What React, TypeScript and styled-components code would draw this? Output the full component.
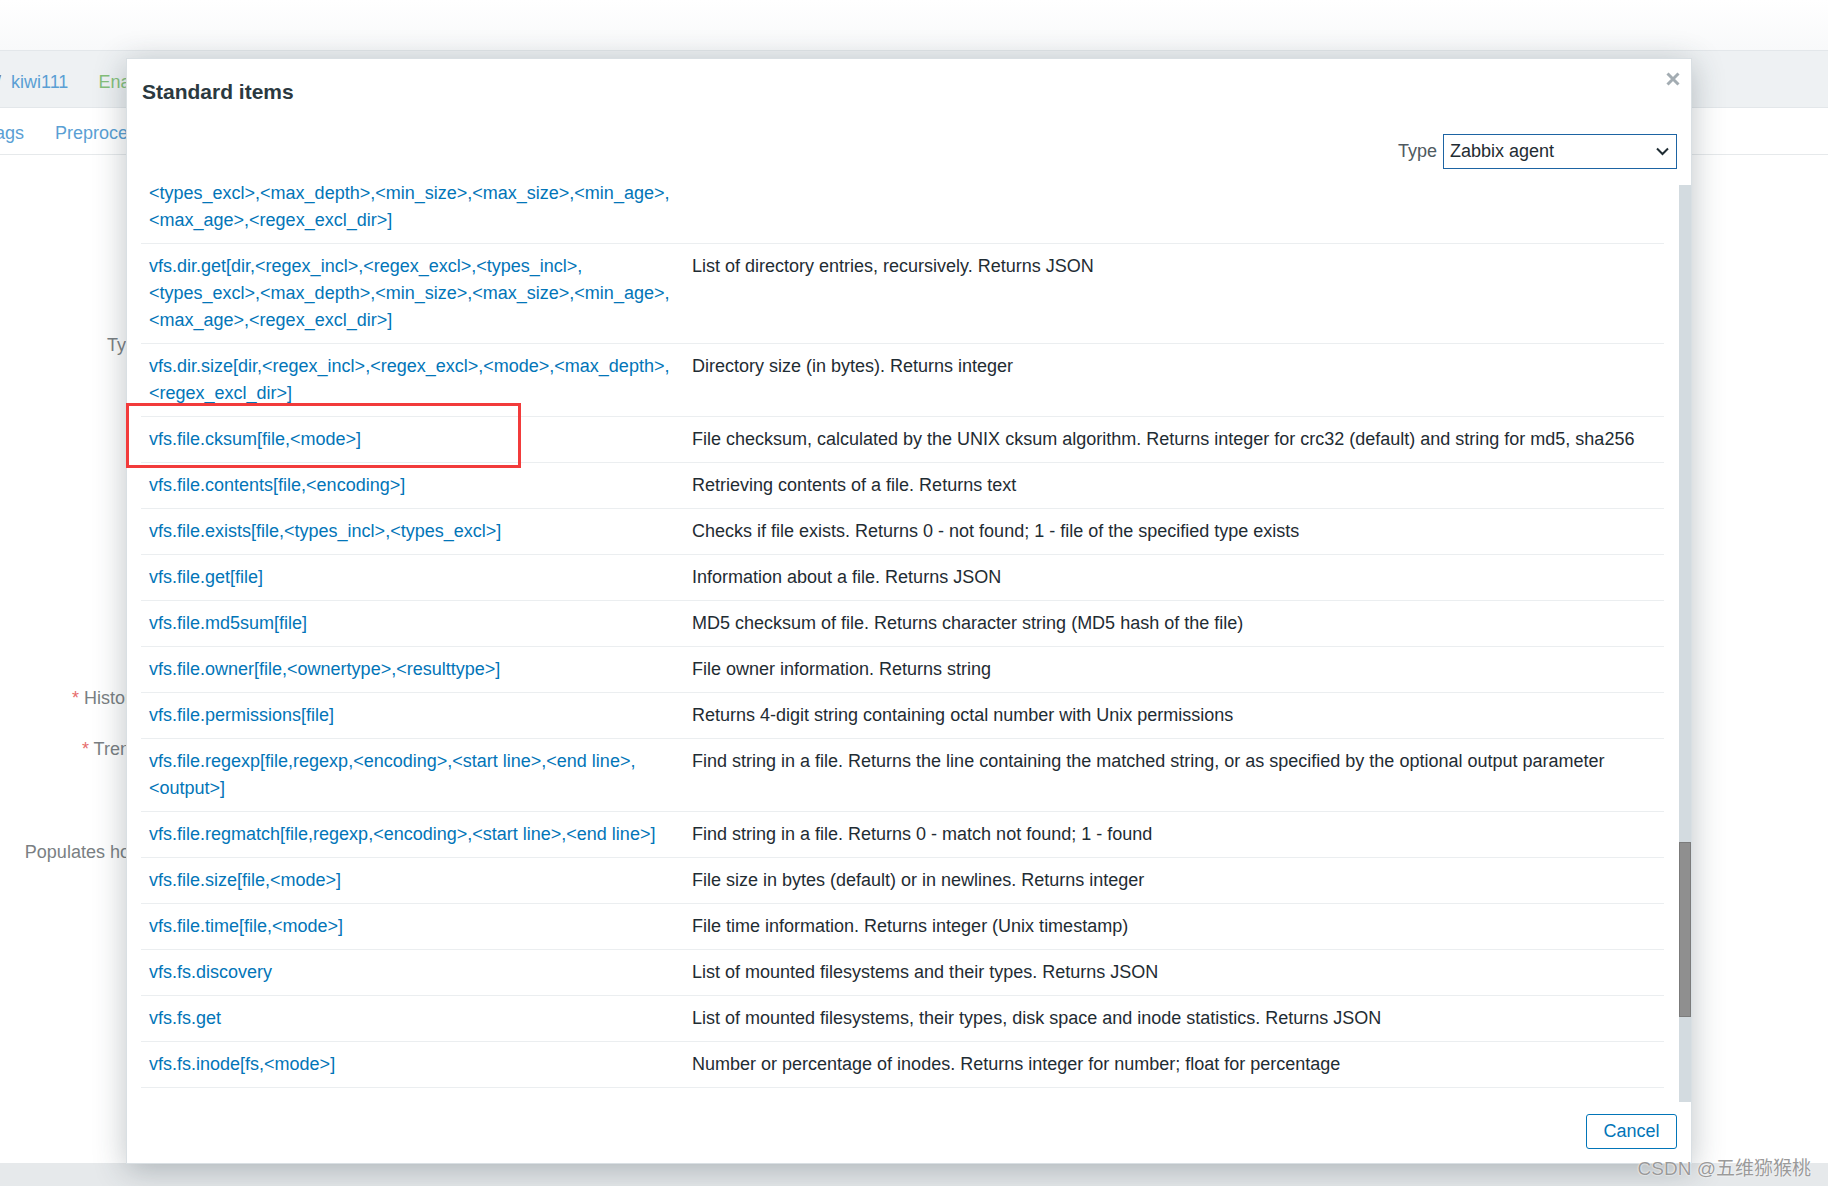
import React from "react";
import styled, { createGlobalStyle } from "styled-components";

const GlobalStyle = createGlobalStyle`
  html, body {
    margin: 0;
    padding: 0;
    overflow: hidden;
    background: #ffffff;
  }
  body {
    font-family: "Liberation Sans", Arial, sans-serif;
    font-size: 18px;
  }
`;

type Item = { key: string; desc: string };

const items: Item[] = [
  {
    key: "vfs.dir.count[dir,<regex_incl>,<regex_excl>,<types_incl>,<types_excl>,<max_depth>,<min_size>,<max_size>,<min_age>,<max_age>,<regex_excl_dir>]",
    desc: "Directory entry count. Returns integer",
  },
  {
    key: "vfs.dir.get[dir,<regex_incl>,<regex_excl>,<types_incl>,<types_excl>,<max_depth>,<min_size>,<max_size>,<min_age>,<max_age>,<regex_excl_dir>]",
    desc: "List of directory entries, recursively. Returns JSON",
  },
  {
    key: "vfs.dir.size[dir,<regex_incl>,<regex_excl>,<mode>,<max_depth>,<regex_excl_dir>]",
    desc: "Directory size (in bytes). Returns integer",
  },
  {
    key: "vfs.file.cksum[file,<mode>]",
    desc: "File checksum, calculated by the UNIX cksum algorithm. Returns integer for crc32 (default) and string for md5, sha256",
  },
  { key: "vfs.file.contents[file,<encoding>]", desc: "Retrieving contents of a file. Returns text" },
  {
    key: "vfs.file.exists[file,<types_incl>,<types_excl>]",
    desc: "Checks if file exists. Returns 0 - not found; 1 - file of the specified type exists",
  },
  { key: "vfs.file.get[file]", desc: "Information about a file. Returns JSON" },
  { key: "vfs.file.md5sum[file]", desc: "MD5 checksum of file. Returns character string (MD5 hash of the file)" },
  { key: "vfs.file.owner[file,<ownertype>,<resulttype>]", desc: "File owner information. Returns string" },
  { key: "vfs.file.permissions[file]", desc: "Returns 4-digit string containing octal number with Unix permissions" },
  {
    key: "vfs.file.regexp[file,regexp,<encoding>,<start line>,<end line>,<output>]",
    desc: "Find string in a file. Returns the line containing the matched string, or as specified by the optional output parameter",
  },
  {
    key: "vfs.file.regmatch[file,regexp,<encoding>,<start line>,<end line>]",
    desc: "Find string in a file. Returns 0 - match not found; 1 - found",
  },
  { key: "vfs.file.size[file,<mode>]", desc: "File size in bytes (default) or in newlines. Returns integer" },
  { key: "vfs.file.time[file,<mode>]", desc: "File time information. Returns integer (Unix timestamp)" },
  { key: "vfs.fs.discovery", desc: "List of mounted filesystems and their types. Returns JSON" },
  { key: "vfs.fs.get", desc: "List of mounted filesystems, their types, disk space and inode statistics. Returns JSON" },
  { key: "vfs.fs.inode[fs,<mode>]", desc: "Number or percentage of inodes. Returns integer for number; float for percentage" },
];

// background page (item edit form behind the overlay)
const Page = styled.div`
  position: relative;
  height: 100vh;
  display: flex;
  flex-direction: column;
  overflow: hidden;
`;

const TopStrip = styled.div`
  height: 51px;
  background: linear-gradient(#ffffff, #f8f9fa);
`;

const HostBar = styled.div`
  height: 58px;
  box-sizing: border-box;
  padding-top: 7px;
  border-top: 1px solid #e3e7ea;
  border-bottom: 1px solid #e3e7ea;
  background: #eef1f3;
  display: flex;
  align-items: center;
  gap: 30px;
  margin-top: -1px;
  white-space: nowrap;
`;

const Crumb = styled.span`
  margin-left: -4px;
  margin-right: -20px;
  color: #6d7780;
`;

const HostLink = styled.span`
  color: #5a9fd4;
`;

const Status = styled.span`
  color: #84c07a;
`;

const TabBar = styled.div`
  height: 47px;
  box-sizing: border-box;
  padding-top: 4px;
  border-bottom: 1px solid #e6e9eb;
  display: flex;
  align-items: center;
  gap: 31px;
  margin-left: -14px;
  white-space: nowrap;
`;

const Tab = styled.span`
  color: #5a9fd4;
`;

const FormArea = styled.div`
  flex: 1;
  display: flex;
  flex-direction: column;
`;

const FormRow = styled.div<{ $gap: number }>`
  margin-top: ${(p) => p.$gap}px;
  width: 260px;
  text-align: right;
  line-height: 27px;
  color: #7a7f83;
  white-space: nowrap;
`;

const Star = styled.span`
  color: #e66c6c;
`;

const PageFooter = styled.div`
  height: 23px;
  background: #e6e9eb;
`;

// overlay dialog
const Dialog = styled.div`
  position: absolute;
  left: 126px;
  top: 58px;
  width: 1566px;
  height: 1106px;
  box-sizing: border-box;
  background: #ffffff;
  border: 1px solid #d9dfe3;
  box-shadow: 0 6px 30px rgba(40, 55, 65, 0.3);
  display: flex;
  flex-direction: column;
`;

const DialogHead = styled.div`
  position: relative;
  height: 47px;
  padding: 19px 15px 0 15px;
  box-sizing: border-box;
`;

const Title = styled.h4`
  margin: 0;
  font-size: 21px;
  line-height: 28px;
  font-weight: bold;
  color: #2b3940;
`;

const CloseButton = styled.button`
  position: absolute;
  top: 12px;
  right: 10px;
  width: 16px;
  height: 16px;
  padding: 0;
  border: 0;
  background: none;
  display: flex;
  align-items: center;
  justify-content: center;
`;

const FilterRow = styled.div`
  margin-top: 28px;
  height: 35px;
  padding-right: 14px;
  display: flex;
  justify-content: flex-end;
  align-items: center;
  gap: 6px;
`;

const FilterLabel = styled.label`
  color: #4f5a61;
`;

const Select = styled.div`
  width: 234px;
  height: 35px;
  box-sizing: border-box;
  border: 1px solid #1d64a3;
  padding: 0 7px 0 6px;
  display: flex;
  align-items: center;
  justify-content: space-between;
  color: #1f2c33;
`;

const Body = styled.div`
  margin-top: 9px;
  height: 924px;
  display: flex;
  padding-left: 14px;
`;

const ListClip = styled.div`
  width: 1523px;
  overflow: hidden;
`;

const List = styled.div<{ $offset: number }>`
  margin-top: ${(p) => -p.$offset}px;
`;

const Row = styled.div`
  display: grid;
  grid-template-columns: 543px 1fr;
  border-bottom: 1px solid #ebeef0;
  line-height: 27px;
`;

const KeyCell = styled.div`
  padding: 9px 8px;
  color: #0275b8;
`;

const DescCell = styled.div`
  padding: 9px 8px;
  color: #1f2c33;
  white-space: nowrap;
`;

const Track = styled.div`
  margin-left: 15px;
  margin-top: 7px;
  width: 12px;
  height: 917px;
  background: #d3dbe0;
  display: flex;
  flex-direction: column;
`;

const Thumb = styled.div<{ $top: number; $size: number }>`
  margin-top: ${(p) => p.$top}px;
  height: ${(p) => p.$size}px;
  box-sizing: border-box;
  background: #8f8f8f;
  border: 1px solid #7b7b7b;
`;

const DialogFoot = styled.div`
  margin-top: 12px;
  padding-right: 14px;
  display: flex;
  justify-content: flex-end;
`;

const CancelButton = styled.button`
  width: 91px;
  height: 35px;
  box-sizing: border-box;
  border: 1px solid #0275b8;
  border-radius: 3px;
  background: #ffffff;
  color: #0275b8;
  font-family: "Liberation Sans", Arial, sans-serif;
  font-size: 18px;
  padding: 0;
`;

// screenshot annotation + watermark
const Highlight = styled.div`
  position: absolute;
  left: 126px;
  top: 403px;
  width: 395px;
  height: 65px;
  box-sizing: border-box;
  border: 3px solid #f23b3b;
`;

const Watermark = styled.div`
  position: absolute;
  right: 17px;
  bottom: 6px;
  font-family: "Liberation Sans", "Noto Sans CJK SC", sans-serif;
  font-size: 19px;
  color: #9a9a9a;
  text-shadow: 0 0 2px #ffffff, 0 0 1px #ffffff;
  white-space: nowrap;
`;

function ItemKey({ text }: { text: string }) {
  const parts = text.split(",");
  return (
    <>
      {parts.map((part, i) => (
        <React.Fragment key={i}>
          {part}
          {i < parts.length - 1 && (
            <>
              ,<wbr />
            </>
          )}
        </React.Fragment>
      ))}
    </>
  );
}

export default function App() {
  return (
    <>
      <GlobalStyle />
      <Page>
        <TopStrip />
        <HostBar>
          <Crumb>/</Crumb>
          <HostLink>kiwi111</HostLink>
          <Status>Enabled</Status>
        </HostBar>
        <TabBar>
          <Tab>Tags</Tab>
          <Tab>Preprocessing</Tab>
        </TabBar>
        <FormArea>
          <FormRow $gap={177}>Type of information</FormRow>
          <FormRow $gap={326}>
            <Star>*</Star> History storage period
          </FormRow>
          <FormRow $gap={24}>
            <Star>*</Star> Trend storage period
          </FormRow>
          <FormRow $gap={76}>Populates host inventory field</FormRow>
        </FormArea>
        <PageFooter />

        <Dialog>
          <DialogHead>
            <Title>Standard items</Title>
            <CloseButton aria-label="Close">
              <svg width="14" height="14" viewBox="0 0 14 14">
                <path d="M1.5 1.5 L12.5 12.5 M12.5 1.5 L1.5 12.5" stroke="#a3acb2" strokeWidth="3" />
              </svg>
            </CloseButton>
          </DialogHead>
          <FilterRow>
            <FilterLabel>Type</FilterLabel>
            <Select>
              <span>Zabbix agent</span>
              <svg width="13" height="9" viewBox="0 0 13 9">
                <path d="M1 1.5 L6.5 7 L12 1.5" fill="none" stroke="#1f2c33" strokeWidth="2" />
              </svg>
            </Select>
          </FilterRow>
          <Body>
            <ListClip>
              <List $offset={34}>
                {items.map((it) => (
                  <Row key={it.key}>
                    <KeyCell>
                      <ItemKey text={it.key} />
                    </KeyCell>
                    <DescCell>{it.desc}</DescCell>
                  </Row>
                ))}
              </List>
            </ListClip>
            <Track>
              <Thumb $top={657} $size={175} />
            </Track>
          </Body>
          <DialogFoot>
            <CancelButton>Cancel</CancelButton>
          </DialogFoot>
        </Dialog>

        <Highlight />
        <Watermark>CSDN @五维猕猴桃</Watermark>
      </Page>
    </>
  );
}
